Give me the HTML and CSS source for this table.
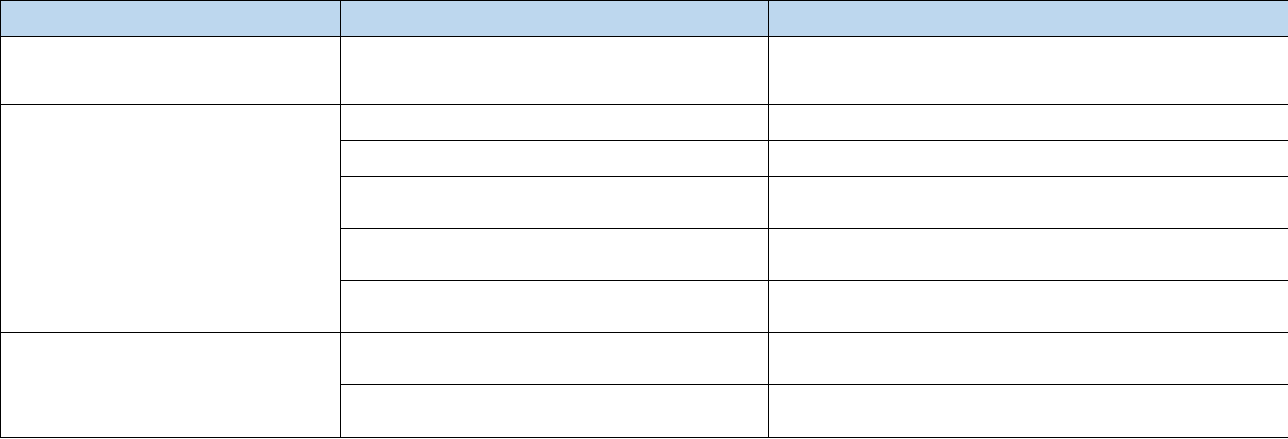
FILE: index.html
```html
<!DOCTYPE html>
<html lang="en">
<head>
<meta charset="utf-8">
<title>Table</title>
<link rel="stylesheet" href="styles.css">
</head>
<body>
<table class="grid">
  <colgroup>
    <col class="c1">
    <col class="c2">
    <col class="c3">
  </colgroup>
  <thead>
    <tr class="h-head"><th></th><th></th><th></th></tr>
  </thead>
  <tbody>
    <tr class="h-tall"><td></td><td></td><td></td></tr>
    <tr class="h-short"><td rowspan="5"></td><td></td><td></td></tr>
    <tr class="h-short"><td></td><td></td></tr>
    <tr class="h-mid"><td></td><td></td></tr>
    <tr class="h-mid"><td></td><td></td></tr>
    <tr class="h-mid"><td></td><td></td></tr>
    <tr class="h-mid"><td rowspan="2"></td><td></td><td></td></tr>
    <tr class="h-last"><td></td><td></td></tr>
  </tbody>
</table>
</body>
</html>
```
FILE: styles.css
```css
html, body {
  margin: 0;
  padding: 0;
  background: #ffffff;
  font-family: "Liberation Sans", Arial, sans-serif;
}
.grid {
  border-collapse: collapse;
  table-layout: fixed;
  width: 1288px;
}
.c1 { width: 340px; }
.c2 { width: 428px; }
.c3 { width: 520px; }
.grid th,
.grid td {
  border: 1px solid #000000;
  padding: 0;
}
.grid th {
  background: #bdd7ee;
}
.h-head { height: 36px; }
.h-tall { height: 68px; }
.h-short { height: 36px; }
.h-mid { height: 52px; }
.h-last { height: 53px; }
```
